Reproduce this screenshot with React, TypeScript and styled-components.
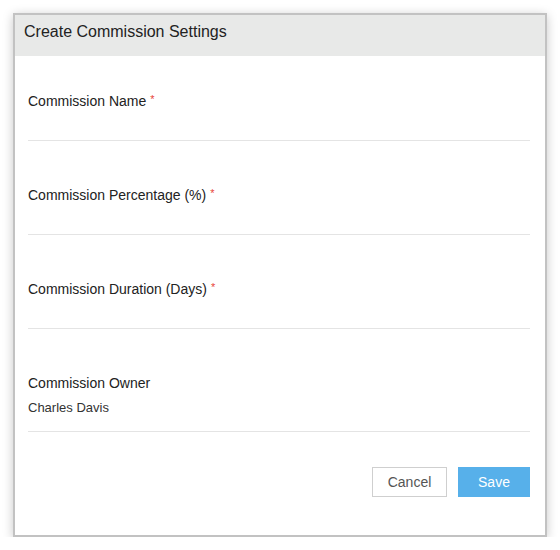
import React from "react";
import styled, { createGlobalStyle } from "styled-components";

const Global = createGlobalStyle`
  html, body { margin: 0; padding: 0; background: #ffffff; }
  body { font-family: "Liberation Sans", Arial, sans-serif; }
  * { box-sizing: border-box; }
`;

const Page = styled.div`
  padding: 13px 0 0 13px;
`;

const Dialog = styled.div`
  width: 534px;
  height: 524px;
  border: 2px solid #c2c2c2;
  background: #ffffff;
  box-shadow: 0 2px 10px rgba(0, 0, 0, 0.22);
  display: flex;
  flex-direction: column;
`;

const Header = styled.div`
  height: 41px;
  background: #e8e9e8;
  padding: 7px 9px 0;
`;

const Title = styled.h1`
  margin: 0;
  font-size: 16px;
  font-weight: normal;
  line-height: 20px;
  color: #222222;
`;

const Body = styled.div`
  padding: 35px 15px 0 13px;
  display: flex;
  flex-direction: column;
  gap: 44px;
`;

const Field = styled.div<{ $filled?: boolean }>`
  display: flex;
  flex-direction: column;
  gap: ${(p) => (p.$filled ? "6px" : "0")};
  padding-bottom: ${(p) => (p.$filled ? "14px" : "0")};
  min-height: ${(p) => (p.$filled ? "auto" : "50px")};
  border-bottom: 1px solid #e4e4e4;
`;

const Label = styled.div`
  font-size: 14px;
  line-height: 20px;
  color: #222222;
`;

const Required = styled.span`
  color: #e8443a;
  font-size: 11px;
  line-height: 11px;
  vertical-align: top;
  margin-left: 4px;
  position: relative;
  top: 3px;
`;

const Value = styled.div`
  font-size: 13px;
  line-height: 18px;
  color: #333333;
`;

const Footer = styled.div`
  display: flex;
  justify-content: flex-end;
  gap: 11px;
  padding: 35px 15px 0 0;
`;

const Button = styled.button<{ $primary?: boolean }>`
  height: 30px;
  width: ${(p) => (p.$primary ? "72px" : "75px")};
  font-family: "Liberation Sans", Arial, sans-serif;
  font-size: 14px;
  border: 1px solid ${(p) => (p.$primary ? "#57b0ea" : "#cfcfcf")};
  background: ${(p) => (p.$primary ? "#57b0ea" : "#ffffff")};
  color: ${(p) => (p.$primary ? "#ffffff" : "#555555")};
  padding: 0;
  cursor: pointer;
`;

const fields = [
  "Commission Name",
  "Commission Percentage (%)",
  "Commission Duration (Days)",
];

export default function App() {
  return (
    <Page>
      <Global />
      <Dialog>
        <Header>
          <Title>Create Commission Settings</Title>
        </Header>
        <Body>
          {fields.map((f) => (
            <Field key={f}>
              <Label>
                {f}
                <Required>*</Required>
              </Label>
            </Field>
          ))}
          <Field $filled>
            <Label>Commission Owner</Label>
            <Value>Charles Davis</Value>
          </Field>
        </Body>
        <Footer>
          <Button>Cancel</Button>
          <Button $primary>Save</Button>
        </Footer>
      </Dialog>
    </Page>
  );
}
